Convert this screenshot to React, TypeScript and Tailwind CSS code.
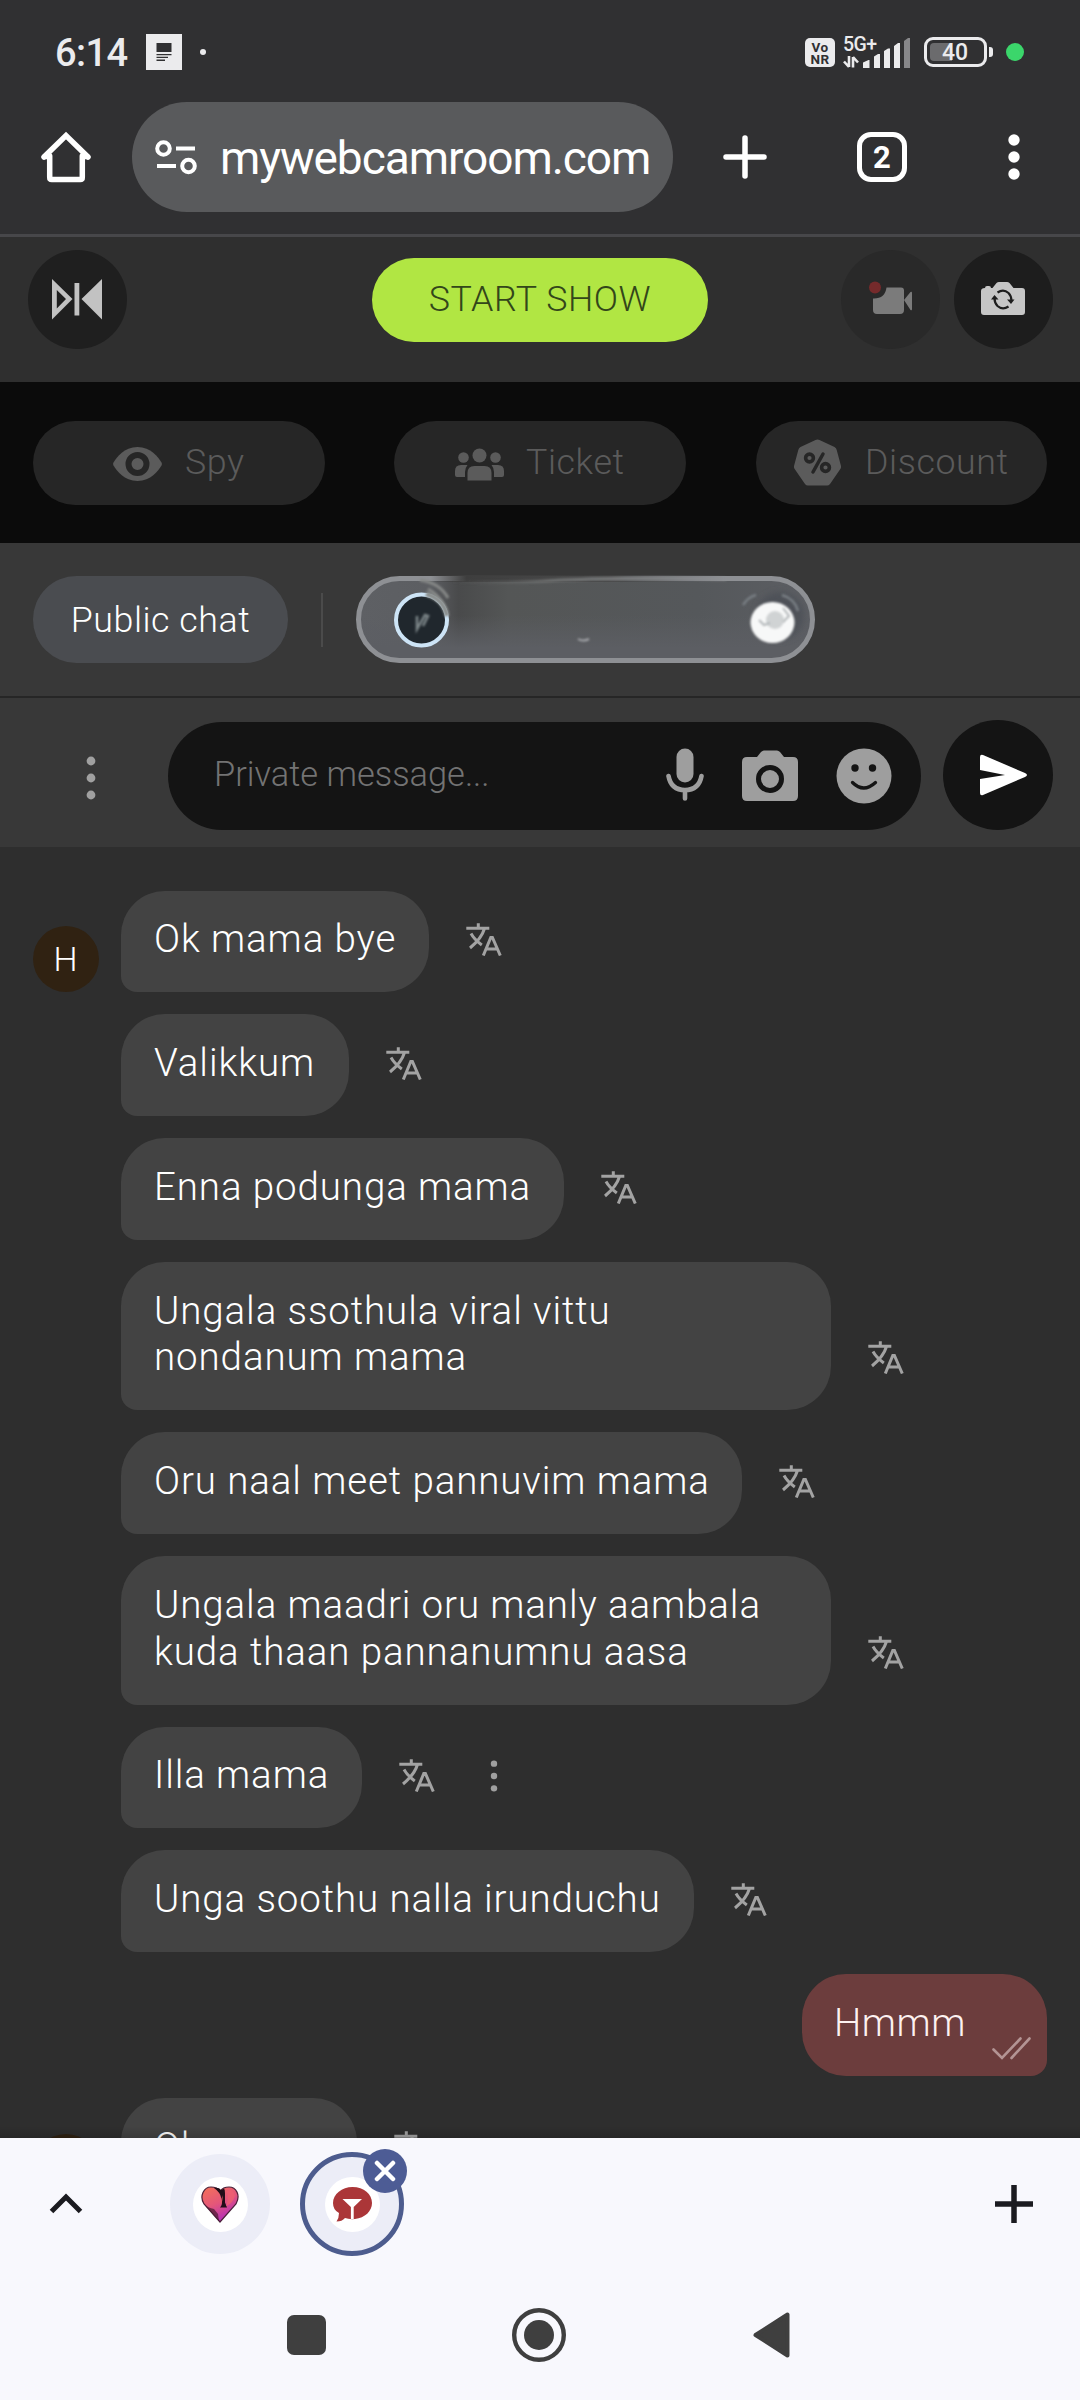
import type { ReactNode } from "react";

type Message = {
  lines: string[];
  width: string;
  mine?: boolean;
  menu?: boolean;
  avatar?: boolean;
  initial?: string;
};

const messages: Message[] = [
  { lines: ["Ok mama bye"], width: "w-[308px]", avatar: true, initial: "H" },
  { lines: ["Valikkum"], width: "w-[228px]" },
  { lines: ["Enna podunga mama"], width: "w-[443px]" },
  { lines: ["Ungala ssothula viral vittu", "nondanum mama"], width: "w-[710px]" },
  { lines: ["Oru naal meet pannuvim mama"], width: "w-[621px]" },
  { lines: ["Ungala maadri oru manly aambala", "kuda thaan pannanumnu aasa"], width: "w-[710px]" },
  { lines: ["Illa mama"], width: "w-[241px]", menu: true },
  { lines: ["Unga soothu nalla irunduchu"], width: "w-[573px]" },
  { lines: ["Hmmm"], width: "w-[245px]", mine: true },
  { lines: ["Ok mama"], width: "w-[236px]", avatar: true },
];

function StatusBar() {
  return (
    <div className="flex h-[102px] shrink-0 items-start text-[#ebebed]">
      <span className="ml-[55px] mt-[31px] text-[38px] leading-[44px] font-medium tracking-[-0.6px]">6:14</span>
      <svg className="absolute left-[146px] top-[34px]" width="36" height="36" viewBox="0 0 36 36">
        <rect width="36" height="36" fill="#ebebed" />
        <path d="M10.500 9h15v9h-15zM10.500 20h15v1.300h-15zM10.500 22.800h11.500v1.300H10.500zM10.500 25.600h8.500v1.300h-8.500z" fill="#303032" />
      </svg>
      <span className="absolute left-[200px] top-[49px] h-[6px] w-[6px] rounded-full bg-[#ebebed]" />

      <div className="ml-auto mr-[56px] mt-[34px] flex items-start">
        <div className="mt-1 flex h-[29px] w-[30px] flex-col items-center rounded-[5px] bg-[#ebebed] pt-[3px] text-[13.5px] leading-[12px] font-bold tracking-[0.5px] text-[#303032]">
          <span>Vo</span>
          <span>NR</span>
        </div>
        <svg className="ml-[8px]" width="72" height="36" viewBox="0 0 72 36">
          <text x="0" y="16.500" fontSize="19.500" fontWeight="500" fill="#ebebed" letterSpacing="-0.600">5G+</text>
          <path d="M6 22v11M6 33l-5-5.500M10 33.500V23M10 23l5 5.500" stroke="#ebebed" strokeWidth="2.600" fill="none" />
          <path d="M20 28.500l5.500-2.500h1v8h-6.500zM31 22.500l4-2.500h2v14h-6zM41 17l4-2.500h2v19.500h-6zM51 12l4-3h2v25h-6z" fill="#ebebed" />
          <path d="M61 7l4-3h2v30h-6z" fill="#87878a" />
        </svg>
        <div className="relative ml-[9px] mt-[3px] h-[30px] w-[63px] rounded-[9px] border-[3px] border-[#ebebed]">
          <span className="absolute left-[3px] top-[3px] h-[18px] w-[22px] rounded-l-[4px] bg-[#6b6b6d]" />
          <span className="absolute left-[15px] top-[1px] text-[23px] leading-[24px] font-medium">40</span>
        </div>
        <span className="ml-[2px] mt-[13px] h-[10px] w-[4px] rounded-r-[3px] bg-[#ebebed]" />
        <span className="ml-[13px] mt-[9px] h-[18px] w-[18px] rounded-full bg-[#3bd66b]" />
      </div>
    </div>
  );
}

function BrowserBar() {
  return (
    <div className="flex h-[132px] shrink-0 items-start text-white">
      <svg className="ml-[41px] mt-[29px]" width="50" height="52" viewBox="0 0 50 52" fill="none" stroke="#fff" strokeWidth="5.500" strokeLinecap="round" strokeLinejoin="round">
        <path d="M8.700 25v21.500q0 2 2 2h28.600q2 0 2-2V25" />
        <path d="M3 26L25 4.500L47 26" strokeLinejoin="miter" />
        <path d="M4 25.500h4M42 25.500h4" />
      </svg>
      <div className="ml-[41px] flex h-[110px] w-[541px] items-start rounded-full bg-[#595a5c]">
        <svg className="ml-[23px] mt-[37px]" width="43" height="36" viewBox="0 0 43 36" fill="none" stroke="#fff" strokeWidth="4">
          <circle cx="8.500" cy="9.500" r="6.300" />
          <circle cx="33.500" cy="27" r="6.300" />
          <path d="M21 9.500h19M2 27h19" />
        </svg>
        <span className="ml-[22px] mt-[28px] whitespace-nowrap text-[46px] leading-[56px] tracking-[-1.05px]">mywebcamroom.com</span>
      </div>
      <svg className="ml-[50px] mt-[33px]" width="44" height="44" viewBox="0 0 44 44" stroke="#fff" strokeWidth="5.500" strokeLinecap="round">
        <path d="M22 3v38M3 22h38" />
      </svg>
      <div className="ml-[90px] mt-[30px] flex h-[50px] w-[50px] items-center justify-center rounded-[14px] border-[5.5px] border-white text-[31px] leading-none font-bold">2</div>
      <svg className="ml-[101px] mt-[32px]" width="12" height="46" viewBox="0 0 12 46" fill="#fff">
        <circle cx="6" cy="6" r="5.700" />
        <circle cx="6" cy="23" r="5.700" />
        <circle cx="6" cy="40" r="5.700" />
      </svg>
    </div>
  );
}

function RoundButton({ className, children }: { className: string; children: ReactNode }) {
  return (
    <button className={`flex h-[99px] w-[99px] shrink-0 items-center justify-center rounded-full ${className}`}>
      {children}
    </button>
  );
}

function ShowControls() {
  return (
    <div className="flex h-[145px] shrink-0 items-start bg-[#2f2f2f] pt-[13px]">
      <RoundButton className="ml-[28px] bg-[#1f1f1f]">
        <svg className="-mt-px -ml-[2px]" width="50" height="42" viewBox="0 0 50 42" fill="#c2c2c2">
          <path fillRule="evenodd" d="M0 1l20.500 20L0 41.500zM4.800 12v18.500l9.200-9.500z" />
          <path d="M22.500 5h4.800v32.500h-4.800zM50 1v40.500L29.500 21z" />
        </svg>
      </RoundButton>
      <button className="ml-[245px] mt-[8px] h-[84px] w-[336px] rounded-full bg-[#b1e643] text-[35.75px] leading-none font-light tracking-[0.55px] text-[#33461a]">
        START SHOW
      </button>
      <RoundButton className="ml-[133px] bg-[#292929]">
        <svg width="46" height="36" viewBox="0 0 46 36" className="-mt-[3px] -ml-[3px]">
          <path d="M21 7.500h14q3 0 3 3V30q0 4-4 4H11q-4 0-4-4V18.500Q19 19 20.500 7.500zM38 20l6.500-8q1.500-1 1.500 1v16q0 2-1.500 1z" fill="#7b7b7b" />
          <circle cx="9" cy="7.500" r="6" fill="#752a2b" />
        </svg>
      </RoundButton>
      <RoundButton className="ml-[14px] bg-[#1d1d1d]">
        <svg className="-mt-px -ml-[2px]" width="44" height="36" viewBox="0 0 44 36">
          <path d="M4 7q0-2 2-2h2q2 0 2 2h1.500l4-5q1-1 2.500-1h8q1.500 0 2.500 1l4 5H41q3 0 3 3v21q0 3-3 3H3q-3 0-3-3V10q0-3 4-3z" fill="#c6c6c6" />
          <path d="M16.500 11.500q6-4 11 .5q3 3 3 8M27.500 25.500q-6 4-11-.5q-3-3-3-8" fill="none" stroke="#1d1d1d" strokeWidth="2.200" />
          <path d="M26 18.500h7.500L30 23zM10 18.500h7.500L13.500 14z" fill="#1d1d1d" />
        </svg>
      </RoundButton>
    </div>
  );
}

function ModeButton({ className, children }: { className: string; children: ReactNode }) {
  return (
    <button className={`flex h-[84px] items-start rounded-full bg-[#262626] text-[35.75px] font-light tracking-[0.6px] text-[#5b5b5b] ${className}`}>
      {children}
    </button>
  );
}

function ModeBar() {
  return (
    <div className="flex h-[161px] shrink-0 items-start bg-[#0b0b0b] pt-[39px]">
      <ModeButton className="ml-[33px] w-[292px]">
        <svg className="ml-[80px] mt-[26px]" width="49" height="34" viewBox="0 0 49 34">
          <path d="M24.500 0C38 0 45 10 48.500 15.500q.8 1.500 0 3C45 24 38 34 24.500 34S4 24 .5 18.500q-.8-1.500 0-3C4 10 11 0 24.500 0z" fill="#5b5b5b" />
          <circle cx="24.500" cy="17" r="9" fill="none" stroke="#262626" strokeWidth="6" />
        </svg>
        <span className="ml-[23px] mt-[20px] leading-[42px]">Spy</span>
      </ModeButton>
      <ModeButton className="ml-[69px] w-[292px]">
        <svg className="ml-[61px] mt-[27px]" width="49" height="33" viewBox="0 0 49 33" fill="#5b5b5b">
          <circle cx="24.500" cy="7.500" r="7" />
          <circle cx="8.500" cy="9.500" r="5.300" />
          <circle cx="40.500" cy="9.500" r="5.300" />
          <path d="M12.500 32.500V25q0-7 7-7h10q7 0 7 7v7.500z" />
          <path d="M2 29q-2 0-2-2v-4q0-6 6-6h6.500q-2.500 3-2.500 7v5zM47 29q2 0 2-2v-4q0-6-6-6h-6.500q2.500 3 2.500 7v5z" />
        </svg>
        <span className="ml-[22px] mt-[20px] leading-[42px]">Ticket</span>
      </ModeButton>
      <ModeButton className="ml-[70px] w-[291px]">
        <svg className="ml-[38px] mt-[18px]" width="47" height="48" viewBox="0 0 47 48">
          <path d="M21.500 1q2-1 4 0L40.500 8q1.800.8 2.200 3L47 27q.3 2-1 3.500L36 45q-1.200 1.500-3 1.500H14q-1.800 0-3-1.500L1 30.500Q-.3 29 0 27L4.300 11Q4.700 9 6.500 8z" fill="#5b5b5b" />
          <g fill="none" stroke="#262626" strokeWidth="3.600">
            <circle cx="15.500" cy="19" r="3.900" />
            <circle cx="31.500" cy="28.500" r="3.900" />
            <path d="M29 15L19 33" strokeWidth="3.500" strokeLinecap="round" />
          </g>
        </svg>
        <span className="ml-[24px] mt-[20px] leading-[42px]">Discount</span>
      </ModeButton>
    </div>
  );
}

function ChatTabs() {
  return (
    <div className="flex h-[155px] shrink-0 items-start border-b-2 border-[#262626] bg-[#383838] pt-[33px]">
      <button className="ml-[33px] flex h-[87px] w-[255px] justify-center rounded-full bg-[#4a4c50] pt-[23px] text-[35.75px] leading-[42px] font-light tracking-[0.55px] text-white">
        Public chat
      </button>
      <span className="ml-[33px] mt-[17px] h-[54px] w-[2px] bg-[#4b4b4b]" />
      {/* Selected private chat, its name smeared out */}
      <svg className="-ml-[7px] -mt-[10px]" width="520" height="107" viewBox="-40 -10 520 107">
        <defs>
          <linearGradient id="smear" x1="0" y1="0" x2="1" y2="0">
            <stop offset="0" stopColor="#5e6064" />
            <stop offset="0.16" stopColor="#5c5e62" />
            <stop offset="0.22" stopColor="#494a4b" />
            <stop offset="0.33" stopColor="#545656" />
            <stop offset="0.75" stopColor="#55585b" />
            <stop offset="1" stopColor="#5c5e63" />
          </linearGradient>
          <linearGradient id="depth" x1="0" y1="0" x2="0" y2="1">
            <stop offset="0.45" stopColor="#5c5e63" stopOpacity="0" />
            <stop offset="0.85" stopColor="#5c5e63" />
          </linearGradient>
          <linearGradient id="edge" x1="0" y1="0" x2="1" y2="0">
            <stop offset="0" stopColor="#3e3e3e" stopOpacity="0" />
            <stop offset="0.12" stopColor="#3e3e3e" />
            <stop offset="0.6" stopColor="#3e3e3e" stopOpacity="0.85" />
            <stop offset="1" stopColor="#55585b" stopOpacity="0" />
          </linearGradient>
          <linearGradient id="ridge" gradientUnits="userSpaceOnUse" x1="95" y1="0" x2="370" y2="0">
            <stop offset="0" stopColor="#5c5d5d" stopOpacity="0" />
            <stop offset="0.35" stopColor="#6f7171" />
            <stop offset="1" stopColor="#8e9094" />
          </linearGradient>
          <filter id="soft1" filterUnits="userSpaceOnUse" x="-40" y="-10" width="520" height="107"><feGaussianBlur stdDeviation="1.100" /></filter>
          <filter id="soft3" filterUnits="userSpaceOnUse" x="-40" y="-10" width="520" height="107"><feGaussianBlur stdDeviation="3" /></filter>
        </defs>
        <rect x="2.500" y="2.500" width="454" height="82" rx="41" fill="url(#smear)" />
        <rect x="2.500" y="2.500" width="454" height="82" rx="41" fill="url(#depth)" stroke="#8e9094" strokeWidth="5" />
        <path d="M75 -1H370V6H75z" fill="url(#edge)" />
        <path d="M95 6Q160 7 190 5T270 2.500T370 3" fill="none" stroke="url(#ridge)" strokeWidth="3" filter="url(#soft1)" />
        <path d="M64 4Q84 7 92 22M72 13Q92 24 90 50" fill="none" stroke="#858786" strokeWidth="3" filter="url(#soft1)" />
        <circle cx="65.500" cy="44" r="25.500" fill="#20272d" stroke="#cde4f6" strokeWidth="4" />
        <path d="M70 18q18 5 21 22" fill="none" stroke="#8c908f" strokeWidth="5" filter="url(#soft1)" />
        <path d="M61 40v13l8-14 3 1-5 10" fill="none" stroke="#7c8588" strokeWidth="2.500" filter="url(#soft1)" />
        <path d="M222 63q5 3 11 0" fill="none" stroke="#a4a6aa" strokeWidth="2" filter="url(#soft1)" />
        <circle cx="424" cy="40" r="24" fill="#484d55" opacity="0.700" filter="url(#soft3)" />
        <path d="M387 29q5-8 13-10M426 19q13 4 16 16" fill="none" stroke="#787e83" strokeWidth="2.500" filter="url(#soft1)" />
        <ellipse cx="416.500" cy="46.500" rx="22" ry="20.500" fill="#f7f8f8" filter="url(#soft1)" />
        <ellipse cx="419" cy="44" rx="9" ry="9" fill="#d0d3d4" filter="url(#soft1)" />
        <path d="M403 44l5 5 6-2M427 32l6 8-6 6" fill="none" stroke="#b4b8ba" strokeWidth="2" filter="url(#soft1)" />
      </svg>
    </div>
  );
}

function Dots({ className }: { className: string }) {
  return (
    <svg className={className} viewBox="0 0 10 44" fill="#a0a0a0">
      <circle cx="5" cy="5" r="4.400" />
      <circle cx="5" cy="22" r="4.400" />
      <circle cx="5" cy="39" r="4.400" />
    </svg>
  );
}

function Composer() {
  return (
    <div className="flex h-[149px] shrink-0 items-start bg-[#383838]">
      <Dots className="ml-[86px] mt-[58px] h-[44px] w-[10px]" />
      <div className="ml-[72px] mt-[24px] flex h-[108px] w-[753px] items-start rounded-full bg-[#141414]">
        <span className="ml-[46px] mt-[31px] w-[299px] text-[34.4px] leading-[42px] font-light whitespace-nowrap text-[#737373]">Private message...</span>
        <svg className="ml-[153px] mt-[26px]" width="38" height="53" viewBox="0 0 38 53">
          <rect x="10.500" y="0.500" width="17" height="34" rx="8.500" fill="#9e9e9e" />
          <path d="M2.500 28Q5 42 19 42T35.500 28M19 42v8.500" fill="none" stroke="#9e9e9e" strokeWidth="4.600" strokeLinecap="round" />
        </svg>
        <svg className="ml-[38px] mt-[28px]" width="56" height="52" viewBox="0 0 56 52">
          <path d="M15 7l4-5q1.500-1.500 3-1.500h13q1.500 0 3 1.500l4 5h9q5 0 5 5v34q0 5-5 5H5q-5 0-5-5V12q0-5 5-5z" fill="#9e9e9e" />
          <circle cx="28" cy="29" r="11.500" fill="none" stroke="#141414" strokeWidth="5" />
        </svg>
        <svg className="ml-[38px] mt-[26px]" width="56" height="56" viewBox="0 0 56 56">
          <circle cx="28" cy="28" r="27.500" fill="#9e9e9e" />
          <circle cx="19" cy="20" r="3.700" fill="#141414" />
          <circle cx="36.500" cy="20" r="3.700" fill="#141414" />
          <path d="M16.500 34.500q11 11 23 0" fill="none" stroke="#141414" strokeWidth="3.300" strokeLinecap="round" />
        </svg>
      </div>
      <button className="ml-[22px] mt-[22px] h-[110px] w-[110px] rounded-full bg-[#141414]">
        <svg className="ml-[37px]" width="47" height="42" viewBox="0 0 47 42">
          <path d="M0 3Q0 0 3 1L45 19q4 2 0 4L3 41q-3 1-3-2V25l25-4L0 16z" fill="#fff" />
        </svg>
      </button>
    </div>
  );
}

function TranslateIcon() {
  return (
    <svg width="36" height="33" viewBox="0 0 36 33" fill="none" stroke="#a3a3a3" strokeWidth="3">
      <path d="M.3 5.200H23.300M12.300.3V5M18.300 6C16 14 10 20 4 25M5 10.500C7.500 15 11 18.500 15.800 22" />
      <path d="M17.300 32.500L24.800 14.500h1.600L34.300 32.500M20 26H31.500" />
    </svg>
  );
}

function MessageRow({ message }: { message: Message }) {
  if (message.mine) {
    return (
      <div className="flex justify-end">
        <div className={`relative shrink-0 rounded-[44px] rounded-br-[16px] bg-[#6c3d3d] pt-[25.75px] pb-[29.25px] pl-[32px] tracking-[0.55px] text-[#fdf1f0] ${message.width}`}>
          {message.lines[0]}
          <svg className="absolute right-[16px] bottom-[16px]" width="39" height="23" viewBox="0 0 39 23" fill="none" stroke="#b39494" strokeWidth="2.600" strokeLinecap="round">
            <path d="M1.500 12.500L10 21L28.500 1.500M19.500 21L37.500 1.500" />
          </svg>
        </div>
      </div>
    );
  }

  return (
    <div className="flex items-end">
      <div className="flex w-[88px] shrink-0">
        {message.avatar && (
          <span className="flex h-[66px] w-[66px] items-center justify-center rounded-full bg-[#302212] text-[34px] font-light">
            {message.initial}
          </span>
        )}
      </div>
      <div className={`shrink-0 rounded-[44px] rounded-bl-[16px] bg-[#434343] pt-[25.75px] pb-[29.25px] pl-[33px] whitespace-nowrap ${message.width}`}>
        {message.lines.map((line) => (
          <div key={line}>{line}</div>
        ))}
      </div>
      <div className="mb-[36px] ml-[37px] flex items-center">
        <TranslateIcon />
        {message.menu && <Dots className="ml-[55px] h-[32px] w-[8px]" />}
      </div>
    </div>
  );
}

function MessageList() {
  return (
    <div className="relative flex h-[1291px] shrink-0 flex-col gap-[22px] overflow-hidden bg-[#2e2e2e] px-[33px] pt-[43.5px] text-[38.5px] leading-[46.75px] font-light tracking-[0.9px] text-white">
      {messages.map((message) => (
        <MessageRow key={message.lines[0]} message={message} />
      ))}
      <div className="absolute inset-x-0 bottom-0 h-[12px] bg-gradient-to-b from-transparent to-black/15" />
    </div>
  );
}

function TabStrip() {
  return (
    <div className="flex h-[132px] shrink-0 items-start">
      <svg className="ml-[49px] mt-[54px]" width="34" height="22" viewBox="0 0 34 22" fill="none" stroke="#1b1b20" strokeWidth="5">
        <path d="M2.500 19.500L17 5L31.500 19.500" />
      </svg>
      <div className="ml-[87px] mt-[16px] flex h-[100px] w-[100px] items-center justify-center rounded-full bg-[#ecedf7]">
        <div className="flex h-[55px] w-[55px] items-center justify-center rounded-full bg-white">
          <svg width="38" height="37" viewBox="0 0 38 37">
            <defs>
              <linearGradient id="heart" x1="0.1" y1="0" x2="0.6" y2="1">
                <stop offset="0" stopColor="#f4705a" />
                <stop offset="0.500" stopColor="#e4567a" />
                <stop offset="1" stopColor="#b02bc0" />
              </linearGradient>
            </defs>
            <path d="M19 36L3 18C-2 10 3 1 10 1q6 0 9 4q3-4 9-4c7 0 12 8 7 17z" fill="url(#heart)" stroke="#4a2038" strokeWidth="1.200" />
            <path d="M13 2q5-1 7 2l3-1.500q1 1 1 5v9l2 5h-7q3-3 1.500-9Q19 6 13 2z" fill="#210d18" />
            <path d="M21.500 9q.5 6-2 10 1-5 2-10z" fill="#e85d68" />
            <path d="M26 5q6-3 8 5-3 8-9 10 3-7 1-15z" fill="#ef5f70" opacity="0.800" />
            <path d="M3 18L18 35L17 28L13 23Q7 22 3 18z" fill="#4a1830" opacity="0.700" />
          </svg>
        </div>
      </div>
      <div className="relative ml-[30px] mt-[14px] flex h-[104px] w-[104px] items-center justify-center rounded-full border-[5.5px] border-[#4d5c8e] bg-[#ecedf7]">
        <div className="flex h-[55px] w-[55px] items-center justify-center rounded-full bg-white">
          <svg width="39" height="36" viewBox="0 0 39 36">
            <path d="M19.500 1C31 1 39 8 39 17c0 8-7 15-17 16q-6 .5-10-1-3 3.500-8.500 3.500Q6 32 6 27Q0 24 0 17C0 8 9 1 19.500 1z" fill="#ab3638" />
            <path d="M9.500 13h19.500l-8.300 8v12h-2.800V21z" fill="#fff" />
          </svg>
        </div>
        <span className="absolute -top-[8px] -right-[8px] flex h-[44px] w-[44px] items-center justify-center rounded-full bg-[#4d5c95]">
          <svg width="22" height="22" viewBox="0 0 22 22" stroke="#fff" strokeWidth="4.500" strokeLinecap="round">
            <path d="M3 3l16 16M19 3L3 19" />
          </svg>
        </span>
      </div>
      <svg className="mt-[47px] mr-[47px] ml-auto" width="38" height="38" viewBox="0 0 38 38" stroke="#1b1b20" strokeWidth="5.500">
        <path d="M19 0v38M0 19h38" />
      </svg>
    </div>
  );
}

function SystemNav() {
  return (
    <div className="flex flex-1 items-center text-[#3f3f3f]">
      <span className="ml-[287px] h-[40px] w-[39px] rounded-[7px] bg-[#3f3f3f]" />
      <svg className="ml-[186px]" width="54" height="54" viewBox="0 0 54 54">
        <circle cx="27" cy="27" r="24.800" fill="none" stroke="currentColor" strokeWidth="4.400" />
        <circle cx="27" cy="27" r="15" fill="currentColor" />
      </svg>
      <svg className="ml-[187px]" width="37" height="46" viewBox="0 0 37 46">
        <path d="M2.500 23L34.500 2.500v41z" fill="currentColor" stroke="currentColor" strokeWidth="4" strokeLinejoin="round" />
      </svg>
    </div>
  );
}

export default function App() {
  return (
    <div className="relative flex h-[2400px] w-[1080px] flex-col overflow-hidden bg-[#303032] font-['Roboto',sans-serif]">
      <StatusBar />
      <BrowserBar />
      <div className="h-[3px] shrink-0 bg-[#47474a]" />
      <ShowControls />
      <ModeBar />
      <ChatTabs />
      <Composer />
      <MessageList />
      <div className="flex flex-1 flex-col bg-[#f8f8fd]">
        <TabStrip />
        <SystemNav />
      </div>
    </div>
  );
}
